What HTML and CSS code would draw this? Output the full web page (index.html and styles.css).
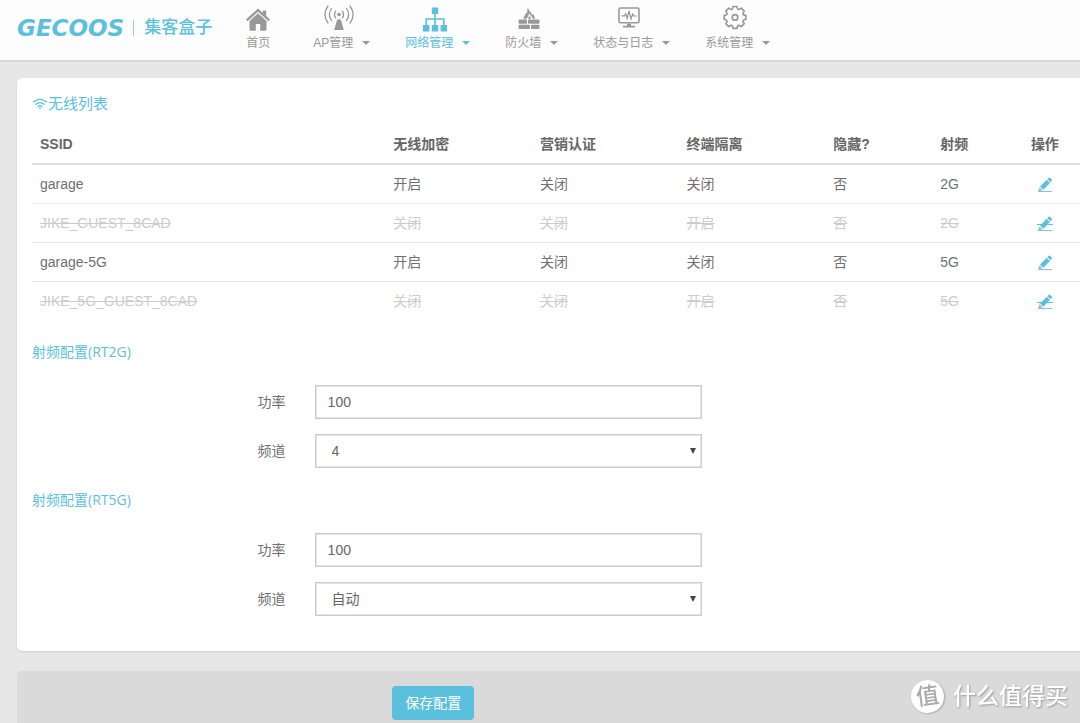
FILE: index.html
```html
<!DOCTYPE html>
<html lang="zh-CN">
<head>
<meta charset="utf-8">
<title>集客盒子</title>
<link rel="stylesheet" href="styles.css">
</head>
<body>
<svg class="defs" width="0" height="0" aria-hidden="true">
  <symbol id="pencil" viewBox="0 0 16 16">
    <path d="M3 9.500 9.700 2.800l3.300 3.300L6.300 12.800z" fill="currentColor"/>
    <path d="M10.300 2.200 11.800.8q.6-.5 1.200 0l1.800 1.800q.5.600 0 1.200l-1.300 1.500z" fill="currentColor"/>
    <path d="M2.500 10.200 5.600 13.300 1 14.700z" fill="#8fbfdc"/>
    <path d="M1 14.500h14" stroke="#7cc7e0" stroke-width="1"/>
  </symbol>
</svg>
<header class="topbar">
  <a class="brand" href="#">
    <span class="brand-name">GECOOS</span>
    <span class="brand-sub">集客盒子</span>
  </a>
  <nav class="nav">
    <a class="nav-item" href="#">
      <svg class="nav-icon" viewBox="0 0 32 32" fill="currentColor"><path d="M16 7 4 18l1.500 1.700L16 10.200l10.500 9.500L28 18l-3.800-3.500V9h-3.400v2.400z"/><path d="M16 11.800 7.500 19.500V28q0 1.300 1.300 1.300h5V22.500h4.400v6.800h5q1.300 0 1.300-1.300v-8.500z"/></svg>
      <span class="nav-label">首页</span>
    </a>
    <a class="nav-item has-menu" href="#">
      <svg class="nav-icon" viewBox="0 0 32 32" fill="none" stroke="currentColor" stroke-width="1.300" stroke-linecap="round"><circle cx="16" cy="13" r="1.800" fill="currentColor" stroke="none"/><path d="M14.200 18h3.600L20.800 28.500h-9.600z" fill="currentColor" stroke="none"/><path d="M12.600 9.600q-2.300 3.400 0 6.800M19.400 9.600q2.300 3.400 0 6.800M8.500 7q-4.200 6 0 12M23.500 7q4.200 6 0 12M5 4.500q-6.200 8.500 0 17M27 4.500q6.200 8.500 0 17"/></svg>
      <span class="nav-label">AP管理<i class="caret"></i></span>
    </a>
    <a class="nav-item has-menu active" href="#">
      <svg class="nav-icon" viewBox="0 0 32 32" fill="currentColor"><path d="M12.800 6h6.400v6.400h-6.400zM4 23.500h6.400V30H4zM12.800 23.500h6.400V30h-6.400zM21.600 23.500H28V30h-6.400z"/><path d="M16 12v12M7.200 24v-6.500h17.600V24" fill="none" stroke="currentColor" stroke-width="1.600"/></svg>
      <span class="nav-label">网络管理<i class="caret"></i></span>
    </a>
    <a class="nav-item has-menu" href="#">
      <svg class="nav-icon" viewBox="0 0 32 32" fill="currentColor"><path d="M15 5.500q-.3 2.500 2 4.500 1.800 1.700 2.500 4l.8-1.500q1.300 2 1.700 4.800h-2.300q-.4-1.500-1.600-2.800l-1.900-2.700q-.8 3-2.600 5.500h-3q0-1.800 1-3l1.800-3 1-.4q-.5-2.500.6-5.400z"/><path d="M14.800 17.300q.4-1.800 1.800-2.800 1.200 1.200 1.400 2.800z"/><rect x="5.500" y="18" width="8.500" height="4.300" rx="1"/><rect x="15" y="18" width="11.500" height="4.300" rx="1"/><rect x="5.500" y="23.200" width="11.500" height="4.300" rx="1"/><rect x="18" y="23.200" width="8.500" height="4.300" rx="1"/></svg>
      <span class="nav-label">防火墙<i class="caret"></i></span>
    </a>
    <a class="nav-item has-menu" href="#">
      <svg class="nav-icon" viewBox="0 0 32 32" fill="none" stroke="currentColor" stroke-width="1.600"><rect x="6" y="6.500" width="20" height="14.800" rx="1.500"/><path d="M8.500 14.300h3l1.200-2 1.500 4.700 1.800-7.500 2 8 1.700-5 1 2h3" stroke-width="1.200"/><path d="M14 22.300h4v2h4v1.700H10v-1.700h4z" fill="currentColor" stroke="none"/></svg>
      <span class="nav-label">状态与日志<i class="caret"></i></span>
    </a>
    <a class="nav-item has-menu" href="#">
      <svg class="nav-icon" viewBox="0 0 32 32" fill="none" stroke="currentColor" stroke-width="1.700" stroke-linejoin="round"><path d="M14 5h4q.3 2.500 1.300 2.900 1 .4 2.900-1.200l3 3q-1.600 1.900-1.200 2.900.4 1 2.800 1.300v4q-2.400.3-2.800 1.300-.4 1 1.200 2.900l-3 3q-1.900-1.600-2.900-1.200-1 .4-1.300 2.900h-4q-.3-2.500-1.300-2.900-1-.4-2.900 1.200l-3-3q1.600-1.900 1.200-2.900-.4-1-2.800-1.300v-4q2.400-.3 2.800-1.300.4-1-1.200-2.900l3-3q1.900 1.600 2.900 1.200Q13.700 7.500 14 5z"/><circle cx="16" cy="15.900" r="2.800"/></svg>
      <span class="nav-label">系统管理<i class="caret"></i></span>
    </a>
  </nav>
</header>

<main class="content">
  <section class="panel">
    <h1 class="panel-title">
      <svg class="wifi" viewBox="0 0 16 12" fill="none" stroke="currentColor" stroke-width="1.200"><path d="M1 4.300q7-5.800 14 0M3.300 6.600q4.700-3.900 9.400 0M5.500 8.700q2.500-2 5 0"/><path d="M6.700 9.700q1.300-1 2.600 0L8 11.300z" fill="currentColor" stroke="none"/></svg>无线列表</h1>
    <table class="wifi-table">
      <thead>
        <tr><th class="c-ssid">SSID</th><th class="c-flag">无线加密</th><th class="c-flag">营销认证</th><th class="c-flag">终端隔离</th><th class="c-hide">隐藏?</th><th class="c-radio">射频</th><th class="c-op">操作</th></tr>
      </thead>
      <tbody>
        <tr><td>garage</td><td>开启</td><td>关闭</td><td>关闭</td><td>否</td><td>2G</td><td class="c-op"><a class="edit" href="#" aria-label="编辑"><svg viewBox="0 0 16 16"><use href="#pencil"/></svg></a></td></tr>
        <tr class="off"><td>JIKE_GUEST_8CAD</td><td>关闭</td><td>关闭</td><td>开启</td><td>否</td><td>2G</td><td class="c-op"><a class="edit" href="#" aria-label="编辑"><svg viewBox="0 0 16 16"><use href="#pencil"/><path d="M0 8.500h16" stroke="currentColor"/></svg></a></td></tr>
        <tr><td>garage-5G</td><td>开启</td><td>关闭</td><td>关闭</td><td>否</td><td>5G</td><td class="c-op"><a class="edit" href="#" aria-label="编辑"><svg viewBox="0 0 16 16"><use href="#pencil"/></svg></a></td></tr>
        <tr class="off"><td>JIKE_5G_GUEST_8CAD</td><td>关闭</td><td>关闭</td><td>开启</td><td>否</td><td>5G</td><td class="c-op"><a class="edit" href="#" aria-label="编辑"><svg viewBox="0 0 16 16"><use href="#pencil"/><path d="M0 8.500h16" stroke="currentColor"/></svg></a></td></tr>
      </tbody>
    </table>

    <h2 class="section-title">射频配置(RT2G)</h2>
    <div class="fields">
      <label for="power2">功率</label>
      <input class="control" id="power2" type="text" value="100">
      <label for="chan2">频道</label>
      <div class="select-wrap"><select class="control" id="chan2"><option>4</option></select></div>
    </div>

    <h2 class="section-title">射频配置(RT5G)</h2>
    <div class="fields">
      <label for="power5">功率</label>
      <input class="control" id="power5" type="text" value="100">
      <label for="chan5">频道</label>
      <div class="select-wrap"><select class="control" id="chan5"><option>自动</option></select></div>
    </div>
  </section>

  <footer class="actions">
    <button class="save" type="button">保存配置</button>
  </footer>
</main>
<div class="watermark"><span class="mark">值</span><span>什么值得买</span></div>
</body>
</html>
```

FILE: styles.css
```css
* {
  box-sizing: border-box;
}

body {
  margin: 0;
  background: #e7e7e7;
  color: #6f6f6f;
  font: 14px/20px "Liberation Sans", "Noto Sans CJK SC", sans-serif;
}

a {
  color: inherit;
  text-decoration: none;
}

.defs {
  position: absolute;
}

.topbar {
  display: flex;
  height: 62px;
  background: #fdfdfd;
  border-bottom: 2px solid #d8d8d8;
}

.brand {
  display: flex;
  align-items: center;
  height: 55px;
  padding-left: 17px;
  color: #5bc0de;
}

.brand-name {
  font: italic bold 23px/24px "DejaVu Sans", sans-serif;
}

.brand-sub {
  margin-left: 9px;
  padding-left: 10px;
  border-left: 1px solid #8fd3e8;
  font-size: 17px;
  font-weight: 500;
  line-height: 16px;
}

.nav {
  display: flex;
  gap: 35px;
  margin-left: 30px;
  color: #999;
  font-size: 12px;
  line-height: 16px;
}

.nav-item {
  display: flex;
  flex-direction: column;
  align-items: center;
}

.nav-item:first-child {
  margin-right: 4px;
}

.nav-icon {
  width: 32px;
  height: 35px;
}

.has-menu .nav-icon {
  margin-right: 6px;
}

.nav-label {
  display: flex;
  align-items: center;
  white-space: nowrap;
}

.caret {
  margin-left: 9px;
  border: 4px solid transparent;
  border-top-color: currentColor;
  border-bottom: 0;
}

.active {
  color: #5bc0de;
}

.content {
  padding: 16px 0 0 17px;
}

.panel {
  padding: 16px 0 35px 15px;
  background: #fff;
  border-radius: 5px 0 0 5px;
  box-shadow: 0 1px 2px #ccc;
}

.panel-title {
  display: flex;
  align-items: center;
  margin: 0 0 11px;
  color: #5bc0de;
  font-size: 15px;
  font-weight: 400;
  line-height: 20px;
}

.wifi {
  width: 16px;
  height: 12px;
}

.wifi-table {
  width: 100%;
  table-layout: fixed;
  border-collapse: collapse;
}

.wifi-table th,
.wifi-table td {
  height: 39px;
  padding: 0 8px;
  text-align: left;
}

.wifi-table th {
  border-bottom: 2px solid #ddd;
  color: #666;
}

.wifi-table td {
  border-bottom: 1px solid #e7e7e7;
}

.wifi-table tr:last-child td {
  border-bottom: 0;
}

.c-ssid { width: 33.7%; }
.c-flag { width: 14%; }
.c-hide { width: 10.2%; }
.c-radio { width: 7.4%; }

.wifi-table .c-op {
  padding: 0;
  text-align: center;
}

.off {
  color: #ccc;
  text-decoration: line-through;
}

.edit {
  display: inline-block;
  width: 16px;
  height: 16px;
  color: #5bc0de;
  vertical-align: middle;
}

.edit svg {
  display: block;
}

.section-title {
  margin: 22px 0 23px;
  color: #5bc0de;
  font: 400 14px/20px "Open Sans", "Noto Sans CJK SC", sans-serif;
}

.fields {
  display: grid;
  grid-template-columns: 24.2% 37%;
  gap: 15px 29px;
  align-items: center;
}

.fields label {
  text-align: right;
}

.control {
  display: block;
  width: 100%;
  height: 34px;
  padding: 0 12px;
  border: 1px solid #ccc;
  border-radius: 0;
  background: #fff;
  box-shadow: inset 0 0 0 1px #e4e4e4;
  color: #666;
  font: inherit;
  appearance: none;
}

select.control {
  padding-left: 16px;
}

.select-wrap {
  position: relative;
}

.select-wrap::after {
  content: "";
  position: absolute;
  top: 14px;
  right: 6px;
  border: 3px solid transparent;
  border-top: 6px solid #444;
  border-bottom: 0;
  pointer-events: none;
}

.actions {
  margin-top: 20px;
  padding: 15px 0 3px 35.3%;
  background: #dadada;
  border-radius: 4px 0 0 0;
}

.save {
  display: block;
  height: 34px;
  padding: 0 13px;
  border: 0;
  border-radius: 4px;
  background: #5bc0de;
  color: #fff;
  font: inherit;
}

.watermark {
  position: fixed;
  right: 12px;
  bottom: 10px;
  display: flex;
  align-items: center;
  gap: 9px;
  color: #fff;
  font-size: 23px;
  font-weight: 500;
  line-height: 34px;
  text-shadow: 1px 1px 2px #999;
}

.mark {
  width: 33px;
  height: 33px;
  border-radius: 50%;
  background: #fff;
  box-shadow: 1px 1px 2px #aaa;
  color: #aaa;
  line-height: 32px;
  text-align: center;
  text-shadow: none;
  transform: rotate(-8deg);
}
```
